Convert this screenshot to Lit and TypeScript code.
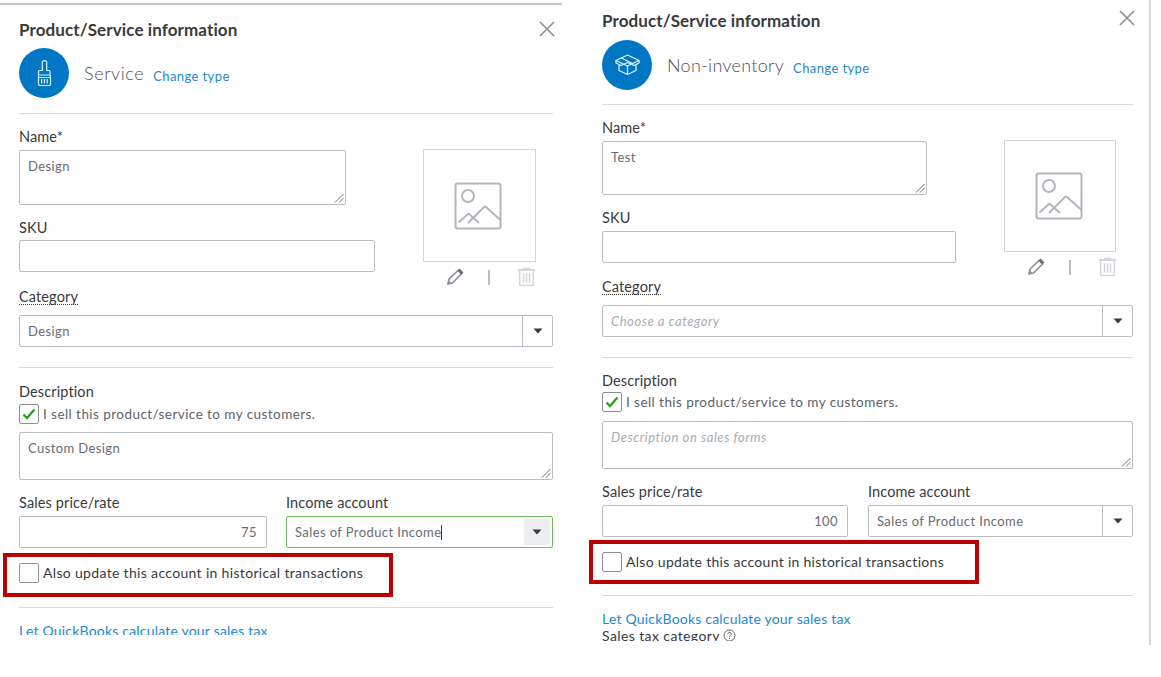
import { LitElement, html, css, svg } from "lit";
import { customElement, property } from "lit/decorators.js";

const arrow = html`<svg class="caret" width="10" height="6" viewBox="0 0 10 6"><path d="M0.5 0.5h9L5 5.5z" fill="#393a3d"/></svg>`;

const brush = svg`<g fill="none" stroke="#dcefff" stroke-width="1.2" stroke-linejoin="round">
  <path d="M12.300 3.500c0-2.600 4.400-2.600 4.400 0V11.500h2.300a1 1 0 0 1 1 1V16H8.500V12.500a1 1 0 0 1 1-1h2.800z"/>
  <path d="M8.500 16v9a1.500 1.500 0 0 0 1.500 1.500h9a1.500 1.500 0 0 0 1.500-1.500v-9"/>
  <path d="M8.500 18.500h12M11.700 20v4.500M14.500 20v4.500M17.300 20v4.500"/>
</g>`;
const box = svg`<g fill="none" stroke="#e6f3ff" stroke-width="1.200" stroke-linejoin="round" stroke-linecap="round">
  <path d="M3 9.500 14.500 4 26 9.500 14.500 15z"/>
  <path d="M8.500 7 19.500 12.500M3 9.500v2.500l5 2.500 6.500-3M26 9.500v2.500l-5 2.500-6.500-3"/>
  <path d="M6 14v5.500l8.500 4 8.500-4V14M14.500 15v8.500"/>
</g>`;

@customElement("item-panel")
class ItemPanel extends LitElement {
  @property({ type: String }) variant = "service";
  @property({ type: Object }) d: any = {};

  static styles = css`
    :host { display: block; font-family: "Lato", "Noto Sans", sans-serif; color: #393a3d; }
    .panel { overflow: hidden; display: block; }
    .service { width: 534px; height: 630px; padding: 0 9px 0 19px; margin-top: 3px; border-top: 2px solid #c4c6cb; }
    .inventory { width: 531px; height: 643px; padding: 2px 16px 0 19px; border-right: 2px solid #d4d6da; }
    .head { display: flex; justify-content: space-between; align-items: flex-start; }
    h2 { margin: 0; font-size: 17px; line-height: 20px; font-weight: 700; letter-spacing: 0.1px; }
    .service h2 { margin-top: 15px; }
    .inventory h2 { margin-top: 9px; }
    .close { display: block; margin-right: -2px; }
    .service .close { margin-top: 16px; }
    .inventory .close { margin-top: 8px; }
    .type { display: flex; align-items: center; height: 50px; }
    .service .type { margin-top: 8px; }
    .inventory .type { margin-top: 9px; }
    .badge { width: 50px; height: 50px; border-radius: 50%; background: #0077c5; display: flex; align-items: center; justify-content: center; flex: none; }
    .name { font-size: 18px; font-weight: 300; color: #4f5156; margin-left: 15px; }
    .service .name { letter-spacing: 0.6px; }
    .inventory .name { letter-spacing: 0.3px; }
    .change { font-size: 13px; color: #2388cc; margin-left: 9px; margin-top: 5px; letter-spacing: 0.4px; }
    hr { border: 0; height: 1px; background: #d9dadd; margin: 0; }
    .service .hr1 { margin-top: 15px; }
    .inventory .hr1 { margin-top: 14px; }
    .label { font-size: 14.5px; line-height: 18px; display: block; letter-spacing: 0.12px; }
    .top { display: flex; }
    .fields { flex: none; }
    .control { box-sizing: border-box; border: 1px solid #babec5; border-radius: 2px; background: #fff; font-size: 13px; display: flex; color: #6b6c72; letter-spacing: 0.4px; }
    .area { position: relative; padding: 7px 8px; align-items: flex-start; line-height: 16px; }
    .grip { position: absolute; right: 1px; bottom: 1px; }
    .placeholder { font-style: italic; color: #a8abb1; letter-spacing: 0.55px; }
    .input { height: 32px; align-items: center; padding: 0 9px; }
    .right { justify-content: flex-end; }
    .select { height: 32px; align-items: stretch; }
    .select .val { flex: 1; display: flex; align-items: center; padding: 0 9px 0 8px; }
    .select .btn { width: 29px; border-left: 1px solid #babec5; display: flex; align-items: center; justify-content: center; flex: none; }
    .focus { border-color: #6bbd5f; }
    .focus .btn { border-left: 0; background: #eceef1; margin: 2px; width: 26px; }
    .cursor { display: inline-block; width: 1px; height: 15px; background: #393a3d; }
    .cat { display: inline-block; border-bottom: 1px dotted #393a3d; line-height: 15px; }
    .pic { box-sizing: border-box; border: 1px solid #d4d6da; display: flex; align-items: center; justify-content: center; padding-right: 3px; }
    .tools { display: flex; align-items: center; height: 20px; margin-top: 5px; }
    .pencil { margin-left: 23px; }
    .sep { width: 1.500px; height: 15px; background: #babec5; margin-left: 24px; }
    .trash { margin-left: 28px; }
    .check { display: flex; align-items: center; font-size: 13.500px; }
    .box { box-sizing: border-box; width: 20px; height: 20px; border: 1px solid #8d9096; border-radius: 2px; display: flex; align-items: center; justify-content: center; flex: none; background: #fff; }
    .check span { margin-left: 4px; letter-spacing: 0.44px; color: #5f6166; }
    .pair { display: flex; }
    .hist { box-sizing: border-box; border: 4px solid #ba0000; height: 44px; display: flex; align-items: center; font-size: 14px; }
    .service .hist { margin-left: -16px; padding: 0 0 5px 12px; }
    .inventory .hist { margin-left: -13px; padding: 0 0 1px 9px; }
    .hist span { margin-left: 4px; letter-spacing: 0.33px; }
    .inventory .hist span { letter-spacing: 0.29px; }
    .link { font-size: 14px; color: #2388cc; line-height: 18px; letter-spacing: 0.2px; display: block; }
    .tax { display: flex; align-items: flex-start; font-size: 14px; line-height: 17px; height: 14px; margin-top: -1px; overflow: hidden; letter-spacing: 0.4px; }
    .tax svg { margin: 2px 0 0 3px; }
  `;

  render() {
    const d = this.d;
    const s = this.variant === "service";
    return html`<div class="panel ${this.variant}">
      <div class="head"><h2>Product/Service information</h2>
        <svg class="close" width="16" height="16" viewBox="0 0 16 16"><path d="M1 1l14 14M15 1L1 15" stroke="#8d9096" stroke-width="1.700" fill="none"/></svg>
      </div>
      <div class="type">
        <div class="badge"><svg width="28" height="28" viewBox="0 0 28 28">${s ? brush : box}</svg></div>
        <span class="name">${d.type}</span><span class="change">Change type</span>
      </div>
      <hr class="hr1" />
      <div class="top">
        <div class="fields">
          <label class="label" style="margin-top:14px">Name*</label>
          <div class="control area" style="width:${d.nameW}px;height:${d.nameH}px;margin-top:4px">${d.name}${this.grip()}</div>
          <label class="label" style="margin-top:14px">SKU</label>
          <div class="control input" style="width:${d.skuW}px;margin-top:${d.skuTop}px"></div>
        </div>
        <div style="margin-top:${d.photoTop}px;margin-left:48px">
          <div class="pic" style="width:${d.picS}px;height:${d.picS}px"><svg width="48" height="48" viewBox="0 0 48 48" fill="none" stroke="#b3b6bc" stroke-width="2"><rect x="1.500" y="1.500" width="45" height="45" rx="2"/><circle cx="14" cy="14" r="6"/><path d="M4.500 40.500 14.500 31.500 25 41M14 41 30 25q1-1 2 0L46.500 38"/></svg></div>
          <div class="tools">
            <svg class="pencil" width="18" height="18" viewBox="0 0 18 18"><path d="M2 16l1-5L12 2.500l3.500 3.500L6.500 15z" fill="#fff" stroke="#8d9096" stroke-width="1.700" stroke-linejoin="round"/><path d="M11.500 2.500l2-2 4 4-2 2z" fill="#6b6c72"/><path d="M1.500 16.500l.9-4.500 3.600 3.600z" fill="#8d9096"/></svg>
            <div class="sep"></div>
            <svg class="trash" width="17" height="20" viewBox="0 0 17 20" fill="none" stroke="#d4d6da" stroke-width="1.500"><path d="M0 3h17" stroke-width="2"/><path d="M5 1.500h7"/><path d="M1.700 4v14.500h13.600V4M5.500 6.500v9M8.500 6.500v9M11.500 6.500v9"/></svg>
          </div>
        </div>
      </div>
      <label class="label" style="margin-top:1px"><span class="cat">Category</span></label>
      <div class="control select" style="margin-top:9px">
        <div class="val ${d.cat ? "" : "placeholder"}">${d.cat || "Choose a category"}</div><div class="btn">${arrow}</div>
      </div>
      <hr style="margin-top:20px" />
      <label class="label" style="margin-top:${d.descTop}px">Description</label>
      <div class="check" style="margin-top:${d.checkTop}px">
        <div class="box"><svg width="14" height="12" viewBox="0 0 14 12"><path d="M1.500 6.500 5 10 12.500 1.500" fill="none" stroke="#2ca01c" stroke-width="2.400"/></svg></div>
        <span>I sell this product/service to my customers.</span>
      </div>
      <div class="control area" style="height:48px;margin-top:${d.areaTop}px">${d.desc ? d.desc : html`<span class="placeholder">Description on sales forms</span>`}${this.grip()}</div>
      <div class="pair" style="margin-top:14px">
        <div style="width:${d.priceW}px"><label class="label">Sales price/rate</label>
          <div class="control input right" style="margin-top:4px">${d.price}</div></div>
        <div style="width:${d.incomeW}px;margin-left:${d.pairGap}px"><label class="label">Income account</label>
          <div class="control select ${s ? "focus" : ""}" style="margin-top:4px">
            <div class="val">Sales of Product Income${s ? html`<i class="cursor"></i>` : ""}</div><div class="btn">${arrow}</div>
          </div></div>
      </div>
      <div class="hist" style="margin-top:${d.histTop}px;width:390px">
        <div class="box"></div><span>Also update this account in historical transactions</span>
      </div>
      <hr style="margin-top:${d.hrTop}px" />
      <a class="link" style="margin-top:${d.linkTop}px">Let QuickBooks calculate your sales tax</a>
      ${s ? "" : html`<div class="tax">Sales tax category<svg width="13" height="13" viewBox="0 0 13 13" fill="none" stroke="#5f6166"><circle cx="6.500" cy="6.500" r="5.500"/><path d="M4.800 5a1.700 1.700 0 1 1 2.600 1.400c-.6.4-.9.700-.9 1.300M6.500 9v1"/></svg></div>`}
    </div>`;
  }

  grip() {
    return html`<svg class="grip" width="10" height="10" viewBox="0 0 10 10"><path d="M9.500 1 1 9.500M9.500 5 5 9.500" stroke="#6b6c72" fill="none"/></svg>`;
  }
}

@customElement("app-root")
export class AppRoot extends LitElement {
  static styles = css`
    :host { display: block; background: #fff; height: 677px; overflow: hidden; }
    .row { display: flex; align-items: flex-start; }
    .next { margin-left: 21px; }
  `;
  render() {
    const left = { type: "Service", name: "Design", nameW: 327, nameH: 55, skuW: 356, skuTop: 3, photoTop: 35, picS: 113, cat: "Design", descTop: 15, checkTop: 3, areaTop: 8, desc: "Custom Design", price: "75", priceW: 248, incomeW: 267, pairGap: 19, histTop: 5, hrTop: 10, linkTop: 14 };
    const right = { type: "Non-inventory", name: "Test", nameW: 325, nameH: 54, skuW: 354, skuTop: 4, photoTop: 35, picS: 112, cat: "", descTop: 14, checkTop: 2, areaTop: 9, desc: "", price: "100", priceW: 246, incomeW: 265, pairGap: 20, histTop: 3, hrTop: 11, linkTop: 14 };
    return html`<div class="row">
      <item-panel variant="service" .d=${left}></item-panel>
      <div class="next"><item-panel variant="inventory" .d=${right}></item-panel></div>
    </div>`;
  }
}
